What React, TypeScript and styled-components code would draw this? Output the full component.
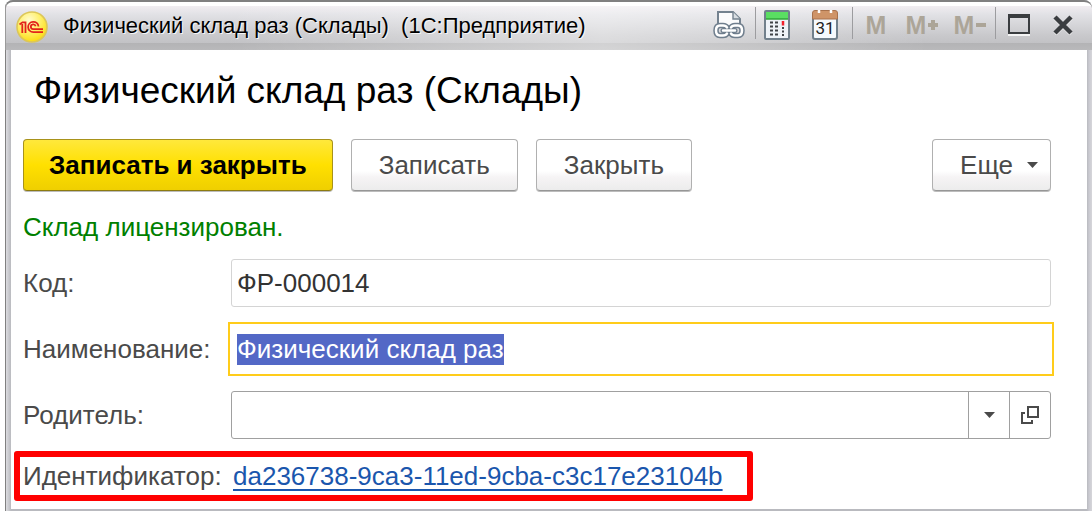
import { useEffect, useRef } from "react";
import styled, { createGlobalStyle } from "styled-components";

const GlobalStyle = createGlobalStyle`
  * { box-sizing: border-box; }
  body {
    margin: 0;
    background: #fff;
    font-family: "Liberation Sans", Arial, sans-serif;
    color: #4a4a4a;
  }
  button, input { font: inherit; color: inherit; }
`;

const Frame = styled.div`
  margin-left: 5px;
  padding: 0 5px 2px 6px;
  border-radius: 8px 8px 0 0;
  background: linear-gradient(90deg, #808080 0 1px, #dcdce0 1px, #b9babf 6px, #b9babf calc(100% - 5px), #c9c9d0 calc(100% - 3px), #d6d6da);
`;

const TitleBar = styled.header`
  display: flex;
  align-items: center;
  height: 50px;
  margin: 0 -5px 0 -6px;
  padding: 2px 8px 0 10px;
  border-top: 2px solid #808080;
  border-left: 1px solid #9a9a9a;
  border-radius: 8px 8px 0 0;
  background:
    linear-gradient(90deg, transparent 20%, rgba(255, 255, 255, 0.4) 55%, transparent 85%),
    linear-gradient(#fff 0 4px, #f1edf1 4px, #e2e2e6 12px, #c8c8cb 34px, #c2c2c5 41px, #b3b3b5 41px, #b9b9bb);
`;

const WindowTitle = styled.div`
  flex: 1;
  min-width: 0;
  margin: 0 0 3px 15px;
  overflow: hidden;
  white-space: pre;
  font-size: 22px;
  line-height: 28px;
  color: #000;
  text-shadow: 1px 1px 0 #f6f6f6;
`;

const Tools = styled.div`
  display: flex;
  align-items: center;
  height: 42px;
  margin-bottom: 4px;
`;

const ToolButton = styled.button<{ $width: number }>`
  display: flex;
  align-items: center;
  justify-content: center;
  width: ${(p) => p.$width}px;
  height: 36px;
  padding: 0;
  border: 0;
  background: none;
`;

const MemoryButton = styled(ToolButton)`
  gap: 2px;
  font: bold 25px/36px "Liberation Sans Narrow", "Liberation Sans", sans-serif;
  color: #aca598;
`;

const Divider = styled.span`
  width: 1px;
  height: 32px;
  margin-bottom: 4px;
  background: #9c9c9f;
`;

const Content = styled.main`
  padding: 20px 36px 8px 12px;
  background: #fff;
`;

const Heading = styled.h1`
  margin: 0 0 27px 11px;
  font-size: 37px;
  line-height: 42px;
  font-weight: 400;
  color: #000;
`;

const Commands = styled.div`
  display: flex;
  gap: 18px;
`;

const Command = styled.button<{ $primary?: boolean }>`
  height: 52px;
  padding: 0 ${(p) => (p.$primary ? 25 : 27)}px;
  border: 1px solid ${(p) => (p.$primary ? "#a8921a" : "#b0b0b0")};
  border-bottom-color: ${(p) => (p.$primary ? "#8c7a10" : "#969696")};
  border-radius: 4px;
  background: ${(p) =>
    p.$primary
      ? "linear-gradient(#ffe83c, #ffe000 50%, #efcf00)"
      : "linear-gradient(#fff 62%, #f6f4f5 74%, #ececec)"};
  box-shadow: 0 1px 0 #bcbcbc;
  font-size: 26px;
  font-weight: ${(p) => (p.$primary ? 700 : 400)};
  color: ${(p) => (p.$primary ? "#000" : "#4a4a4a")};
  white-space: nowrap;
`;

const MoreCommand = styled(Command)`
  display: flex;
  align-items: center;
  gap: 14px;
  margin-left: auto;
  padding-right: 12px;
`;

const Status = styled.p`
  margin: 21px 0 17px;
  font-size: 26px;
  line-height: 30px;
  color: #008000;
`;

const Fields = styled.div`
  display: grid;
  grid-template-columns: 208px 1fr;
  row-gap: 18px;
  align-items: center;
  font-size: 26px;
`;

const Label = styled.label`
  white-space: nowrap;
`;

const TextInput = styled.input<{ $muted?: boolean }>`
  width: 100%;
  height: 48px;
  padding: 0 5px;
  border: 1px solid ${(p) => (p.$muted ? "#d4d4d4" : "#a0a0a0")};
  border-radius: 3px;
  background: #fff;
  color: #333;
  outline: none;
  &:focus {
    border-color: #fff;
    border-radius: 0;
    outline: 2px solid #ffcc1a;
    outline-offset: 1px;
    caret-color: #ac973a;
  }
  &::selection { background: #5368c6; color: #fff; }
`;

const Picker = styled.div`
  display: flex;
  height: 48px;
  border: 1px solid #a0a0a0;
  border-radius: 3px;
`;

const PickerInput = styled.input`
  flex: 1;
  min-width: 0;
  padding: 0 5px;
  border: 0;
  background: none;
  outline: none;
`;

const PickerButton = styled.button`
  display: flex;
  align-items: center;
  justify-content: center;
  width: 41px;
  padding: 0;
  border: 0;
  border-left: 1px solid #a0a0a0;
  background: none;
`;

const Identifier = styled.div`
  display: grid;
  grid-template-columns: 210px auto;
  align-items: center;
  width: fit-content;
  height: 50px;
  margin: 12px 0 0 -9px;
  padding: 0 24px 0 3px;
  border: 6px solid #f00;
  border-radius: 3px;
  font-size: 26px;
`;

const IdLink = styled.a`
  color: #1a56ad;
  text-decoration: underline 2px;
  text-underline-offset: 4px;
  text-decoration-skip-ink: none;
`;

const Logo = () => (
  <svg width="32" height="32" viewBox="0 0 32 32" aria-hidden="true">
    <defs>
      <radialGradient id="coin" cx="40%" cy="28%" r="75%">
        <stop offset="0" stopColor="#fffbd0" />
        <stop offset="0.5" stopColor="#fff06a" />
        <stop offset="1" stopColor="#fbd90c" />
      </radialGradient>
    </defs>
    <circle cx="16" cy="16" r="15" fill="url(#coin)" stroke="#dcc658" strokeWidth="1.6" />
    <g fill="none" stroke="#e2231a" strokeWidth="1.8">
      <path d="M3.5 13.500 6.500 11.300H9.500V22M6.300 22V13" />
      <path d="M22.500 15.500A5.200 5.200 0 1 0 17.300 21.200H27" />
      <path d="M19.600 15.300A2.400 2.400 0 1 0 17.300 18.200H27" />
    </g>
  </svg>
);

const PrintLinkIcon = () => (
  <svg width="32" height="28" viewBox="0 0 32 28" aria-hidden="true">
    <path d="M5 16V1H20L27 8V16Z" fill="#fbfbfc" stroke="#74828f" strokeWidth="2" />
    <path d="M20 1V8H27" fill="#d8dde2" stroke="#74828f" strokeWidth="1.4" />
    <g fill="none" strokeLinecap="round">
      <path d="M14 16.500Q13 14.500 10 14.500H7Q3 14.500 3 19.500T7 24.500H10Q13 24.500 14 22.500M18 16.500Q19 14.500 22 14.500H25Q29 14.500 29 19.500T25 24.500H22Q19 24.500 18 22.500" stroke="#6f7e8d" strokeWidth="5.500" />
      <path d="M10 19.500H22" stroke="#6f7e8d" strokeWidth="5" />
      <path d="M14 16.500Q13 14.500 10 14.500H7Q3 14.500 3 19.500T7 24.500H10Q13 24.500 14 22.500M18 16.500Q19 14.500 22 14.500H25Q29 14.500 29 19.500T25 24.500H22Q19 24.500 18 22.500M10 19.500H22" stroke="#fff" strokeWidth="2.500" />
    </g>
  </svg>
);

const CalculatorIcon = () => (
  <svg width="26" height="30" viewBox="0 0 26 30" aria-hidden="true">
    <rect x="1" y="1" width="24" height="28" rx="1" fill="#eef3f8" stroke="#71808c" strokeWidth="2" />
    <rect x="2" y="2" width="22" height="7" fill="#5ade62" />
    <path d="M2 9H24" stroke="#31a53a" strokeWidth="1.5" />
    <path d="M6 12.5H9M11 12.5H14M6 16.5H9M11 16.5H14M6 20.5H9M11 20.5H14M6 24.5H9M11 24.5H14M18 18H20M18 21.5H20M18 25H20" stroke="#3e4347" strokeWidth="2" />
    <path d="M19 11V15.5" stroke="#f2202c" strokeWidth="2.5" />
  </svg>
);

const CalendarIcon = () => (
  <svg width="26" height="30" viewBox="0 0 26 30" aria-hidden="true">
    <path d="M1 8H25V27Q25 29 23 29H3Q1 29 1 27Z" fill="#f5f9fd" stroke="#71808c" strokeWidth="2" />
    <path d="M.5 9V3Q.5 .5 3 .5H23Q25.5 .5 25.5 3V9Z" fill="#cf9468" stroke="#a8714c" />
    <path d="M7 0V3M19 0V3" stroke="#fff" strokeWidth="2.5" />
    <text x="13" y="24" textAnchor="middle" fontFamily="Roboto, sans-serif" fontSize="17" fill="#222">31</text>
  </svg>
);

const Caret = () => (
  <svg width="11" height="6" viewBox="0 0 11 6" aria-hidden="true">
    <path d="M0 0H11L5.500 6Z" fill="#4a4a4a" />
  </svg>
);

const OpenIcon = () => (
  <svg width="18" height="18" viewBox="0 0 18 18" fill="none" stroke="#4a4a4a" strokeWidth="2" aria-hidden="true">
    <path d="M7 1H17V11H7ZM4 7H1V17H11V14" />
  </svg>
);

const Plus = () => (
  <svg width="10" height="10" viewBox="0 0 10 10" aria-hidden="true">
    <path d="M5 0V10M0 5H10" stroke="#aca598" strokeWidth="4" />
  </svg>
);

const Minus = () => (
  <svg width="10" height="10" viewBox="0 0 10 10" aria-hidden="true">
    <path d="M0 5H10" stroke="#aca598" strokeWidth="4" />
  </svg>
);

const MaximizeIcon = () => (
  <svg width="22" height="22" viewBox="0 0 22 22" aria-hidden="true">
    <path d="M0 21H22" stroke="#f4f4f4" strokeWidth="2" />
    <path d="M1 2V19H21V2" fill="none" stroke="#3a3d40" strokeWidth="2" />
    <path d="M0 2H22" stroke="#3a3d40" strokeWidth="4" />
  </svg>
);

const CloseIcon = () => (
  <svg width="20" height="20" viewBox="0 0 20 20" aria-hidden="true">
    <path d="M2 3 18 19M18 3 2 19" stroke="#f4f4f4" strokeWidth="4" />
    <path d="M2 2 18 18M18 2 2 18" stroke="#3a3d40" strokeWidth="4.500" />
  </svg>
);

export default function App() {
  const nameRef = useRef<HTMLInputElement>(null);

  useEffect(() => {
    nameRef.current?.focus();
    nameRef.current?.select();
  }, []);

  return (
    <>
      <GlobalStyle />
      <Frame>
        <TitleBar>
          <Logo />
          <WindowTitle>{"Физический склад раз (Склады)  (1С:Предприятие)"}</WindowTitle>
          <Tools>
            <ToolButton $width={52} aria-label="Печать"><PrintLinkIcon /></ToolButton>
            <Divider />
            <ToolButton $width={42} aria-label="Калькулятор"><CalculatorIcon /></ToolButton>
            <ToolButton $width={54} aria-label="Календарь"><CalendarIcon /></ToolButton>
            <Divider />
            <MemoryButton $width={46}>M</MemoryButton>
            <MemoryButton $width={46}>M<Plus /></MemoryButton>
            <MemoryButton $width={50}>M<Minus /></MemoryButton>
            <Divider />
            <ToolButton $width={46} aria-label="Развернуть"><MaximizeIcon /></ToolButton>
            <ToolButton $width={42} aria-label="Закрыть окно"><CloseIcon /></ToolButton>
          </Tools>
        </TitleBar>
        <Content>
          <Heading>Физический склад раз (Склады)</Heading>
          <Commands>
            <Command $primary>Записать и закрыть</Command>
            <Command>Записать</Command>
            <Command>Закрыть</Command>
            <MoreCommand>Еще<Caret /></MoreCommand>
          </Commands>
          <Status>Склад лицензирован.</Status>
          <Fields>
            <Label htmlFor="code">Код:</Label>
            <TextInput id="code" $muted defaultValue="ФР-000014" />
            <Label htmlFor="name">Наименование:</Label>
            <TextInput id="name" ref={nameRef} defaultValue="Физический склад раз" />
            <Label htmlFor="parent">Родитель:</Label>
            <Picker>
              <PickerInput id="parent" />
              <PickerButton aria-label="Выбрать из списка"><Caret /></PickerButton>
              <PickerButton aria-label="Открыть"><OpenIcon /></PickerButton>
            </Picker>
          </Fields>
          <Identifier>
            <span>Идентификатор:</span>
            <IdLink href="#id">da236738-9ca3-11ed-9cba-c3c17e23104b</IdLink>
          </Identifier>
        </Content>
      </Frame>
    </>
  );
}
